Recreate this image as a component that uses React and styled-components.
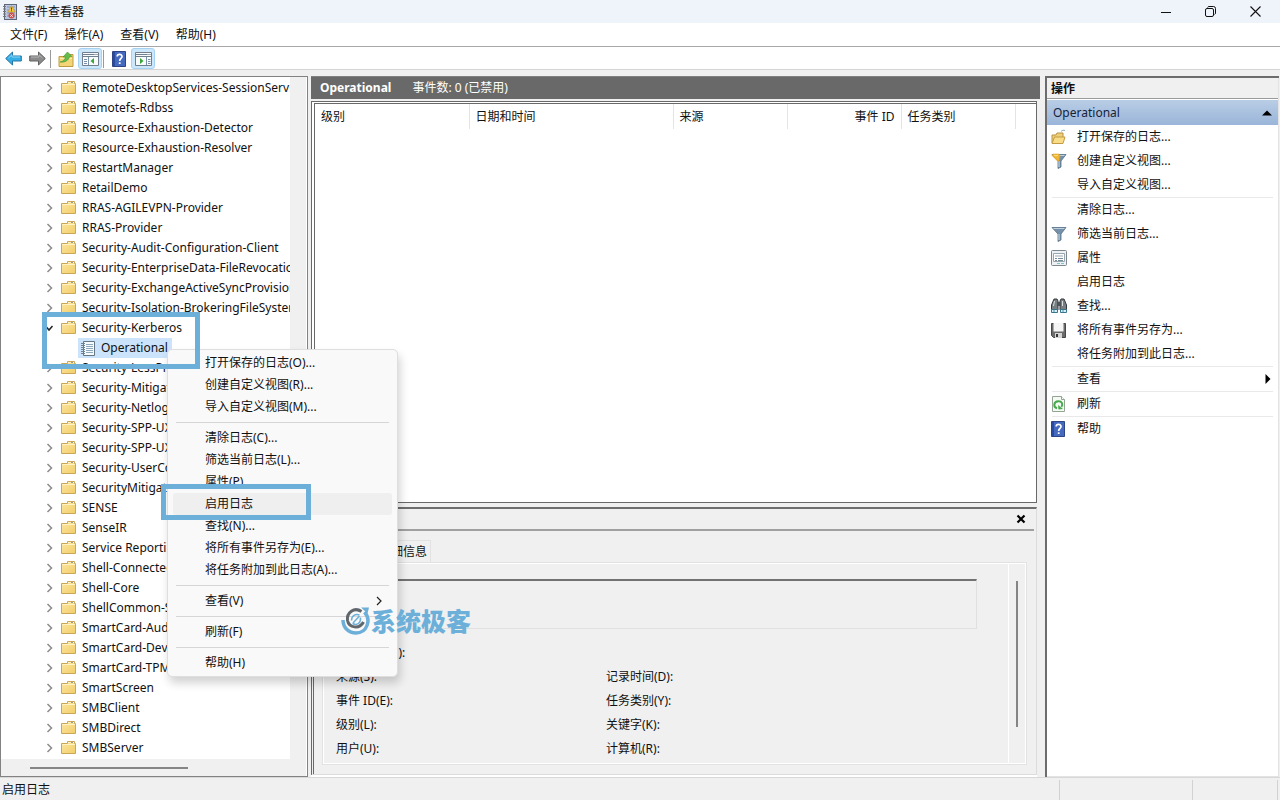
import React from "react";
import styled, { createGlobalStyle, css } from "styled-components";

const GlobalStyle = createGlobalStyle`
  * {
    box-sizing: border-box;
  }

  body {
    margin: 0;
    background: #f0f0f0;
    color: #111;
    font-family: "Noto Sans", "Noto Sans CJK SC", sans-serif;
    font-size: 12px;
    line-height: 20px;
    overflow: hidden;
  }

  button {
    margin: 0;
    padding: 0;
    border: 0;
    background: none;
    color: inherit;
    font: inherit;
    text-align: left;
  }

  svg {
    display: block;
    flex: none;
  }
`;

const Window = styled.div`
  position: relative;
  display: flex;
  flex-direction: column;
  height: 100vh;
`;

const TitleBar = styled.header`
  display: flex;
  align-items: center;
  height: 23px;
  padding: 0 2px;
  background: #eff3fa;
`;

const Title = styled.h1`
  flex: 1;
  margin: 0;
  padding-left: 6px;
  font-size: 12px;
  font-weight: 400;
`;

const CaptionButton = styled.button`
  display: flex;
  align-items: center;
  justify-content: center;
  width: 45px;
  height: 20px;
`;

const MenuBar = styled.nav`
  display: flex;
  gap: 17px;
  height: 24px;
  padding: 0 10px;
  align-items: center;
  background: #fff;
  border-bottom: 1px solid #a8a8a8;
`;

const ToolBar = styled.div`
  display: flex;
  align-items: center;
  height: 23px;
  padding: 1px 0 0 1px;
  background: #fff;
  border-bottom: 1px solid #d4d4d4;
`;

const ToolButton = styled.button`
  display: flex;
  align-items: center;
  justify-content: center;
  width: 24px;
  height: 21px;
  border-radius: 3px;
  ${props =>
    props.$pressed &&
    css`
      background: #cce6fa;
      border: 1px solid #a5d2f3;
    `}
`;

const ToolDivider = styled.span`
  width: 1px;
  height: 18px;
  margin: 0 3px 0 1px;
  background: #9a9a9a;
`;

const Main = styled.main`
  flex: 1;
  min-height: 0;
  display: grid;
  grid-template-columns: 308px minmax(0, 1fr) 234px;
  padding: 6px 1px 0 0;
`;

const TreePane = styled.section`
  display: grid;
  grid-template-columns: minmax(0, 1fr) 17px;
  grid-template-rows: minmax(0, 1fr) 17px;
  border: 1px solid #828282;
  box-shadow: inset -1px 0 #fff;
  min-height: 0;
`;

const Tree = styled.ul`
  margin: 0;
  padding: 1px 0 0;
  list-style: none;
  background: #fff;
  overflow: hidden;
`;

const Branch = styled.li`
  display: flex;
  align-items: center;
  height: 20px;
  padding-left: ${props => (props.$leaf ? 77 : 43)}px;
  white-space: nowrap;
`;

const BranchText = styled.span`
  padding-left: 6px;
`;

const Selected = styled.span`
  display: flex;
  align-items: center;
  gap: 6px;
  height: 20px;
  padding: 0 4px 0 3px;
  background: #cce4fb;
`;

const Expander = styled.span`
  flex: none;
  width: 17px;
`;

const ScrollX = styled.div`
  grid-column: 1 / -1;
  padding: 8px 0 0 29px;
`;

const ThumbX = styled.div`
  width: 158px;
  height: 2px;
  background: #858585;
`;

const CenterPane = styled.section`
  display: flex;
  flex-direction: column;
  margin: 0 5px 0 3px;
  min-height: 0;
`;

const CenterHeader = styled.header`
  display: flex;
  gap: 21px;
  align-items: center;
  height: 23px;
  padding-left: 9px;
  background: #696969;
  color: #fff;
  border-top: 1px solid #808080;
`;

const EventList = styled.div`
  flex: 1;
  margin: 2px 3px 0 0;
  background: #fff;
  border-color: #696969;
  border-style: double solid solid double;
  border-width: 3px 1px 1px 4px;
  min-height: 0;
`;

const EventTable = styled.table`
  width: 100%;
  table-layout: fixed;
  border-collapse: collapse;
`;

const HeadCell = styled.th`
  width: ${props => props.$width};
  height: 25px;
  padding: 0 6px;
  border-right: ${props => (props.$last ? "0" : "1px solid #e4e4e4")};
  font-weight: 400;
  text-align: ${props => props.$align || "left"};
`;

const Preview = styled.section`
  display: flex;
  flex-direction: column;
  height: 268px;
  margin: 4px 3px 2px 0;
  border: 1px solid #dcdcdc;
  border-top: 2px solid #6e6e6e;
  border-left: 3px double #696969;
  box-shadow: 0 2px #fff;
`;

const PreviewHeader = styled.header`
  display: flex;
  justify-content: flex-end;
  align-items: center;
  height: 22px;
  margin-right: 2px;
  padding-right: 8px;
  border-bottom: 2px solid #a0a0a0;
`;

const Tabs = styled.div`
  display: flex;
  padding: 9px 0 0 10px;
`;

const Tab = styled.button`
  min-width: 51px;
  height: 22px;
  padding: 0 3px;
  border: 1px solid #e2e2e2;
  border-bottom: 0;
  text-align: center;
`;

const TabPage = styled.div`
  flex: 1;
  display: flex;
  margin: 0 9px 9px 8px;
  border: 1px solid #e2e2e2;
  box-shadow: inset 1px 1px #fff, inset -1px -1px #fff;
`;

const Details = styled.div`
  flex: 1;
  padding: 16px 31px 0 13px;
  border-right: 1px solid #fff;
`;

const Message = styled.div`
  height: 50px;
  margin-bottom: 12px;
  border: 1px solid #e0e0e0;
  border-top: 2px solid #727272;
`;

const Fields = styled.dl`
  display: grid;
  grid-template-columns: 270px 1fr;
  grid-auto-rows: 24px;
  margin: 0;
`;

const Field = styled.dt`
  display: flex;
  align-items: center;
  grid-column: ${props => (props.$wide ? "1 / -1" : "auto")};
`;

const ScrollY = styled.div`
  width: 17px;
  padding: 18px 0 0 7px;
`;

const ThumbY = styled.div`
  width: 2px;
  height: 146px;
  background: #858585;
`;

const ActionsPane = styled.aside`
  display: flex;
  flex-direction: column;
  background: #fff;
  border: solid #6c6c6c;
  border-width: 2px 0 0 2px;
  box-shadow: inset -1px -1px #e3e3e3;
`;

const ActionsTitle = styled.h2`
  height: 21px;
  margin: 0 1px 1px 0;
  padding-left: 4px;
  background: #f0f0f0;
  border-bottom: 1px solid #9a9a9a;
  font-size: 12px;
  font-weight: 700;
  line-height: 22px;
`;

const GroupHeader = styled.button`
  display: flex;
  align-items: center;
  justify-content: space-between;
  height: 25px;
  margin-right: 1px;
  padding: 0 6px;
  background: linear-gradient(#b9cde5, #9ab5d9);
  color: #14233a;
`;

const Action = styled.button`
  display: flex;
  align-items: center;
  height: 24px;
  padding: 0 8px 0 4px;
`;

const ActionIcon = styled.span`
  width: 26px;
`;

const ActionLabel = styled.span`
  flex: 1;
`;

const ActionRule = styled.hr`
  width: auto;
  height: 1px;
  margin: 0 6px 0 5px;
  border: 0;
  background: #e9e9e9;
`;

const StatusBar = styled.footer`
  display: grid;
  grid-template-columns: 1fr 133px 85px 2px;
  align-items: end;
  height: 23px;
  border-top: 1px solid #d8d8d8;
`;

const StatusCell = styled.span`
  height: 20px;
  padding-left: 2px;
  border-right: 1px solid #d2d2d2;
`;

const ContextMenu = styled.div`
  position: absolute;
  left: 167px;
  top: 349px;
  width: 231px;
  padding: 2px 5px;
  background: #f9f9f9;
  border: 1px solid #dedede;
  border-radius: 5px;
  box-shadow: 2px 6px 10px rgba(0, 0, 0, 0.18);
`;

const MenuItem = styled.button`
  display: flex;
  align-items: center;
  justify-content: space-between;
  width: 100%;
  height: 22px;
  padding: 0 9px 0 32px;
  border-radius: 3px;
  background: ${props => (props.$hover ? "#efefef" : "transparent")};
`;

const MenuRule = styled.hr`
  height: 1px;
  margin: 4px 3px;
  border: 0;
  background: #d6d6d6;
`;

const Callout = styled.div`
  position: absolute;
  left: ${props => props.$x}px;
  top: ${props => props.$y}px;
  width: ${props => props.$w}px;
  height: ${props => props.$h}px;
  border: 5px solid #6cafd9;
  pointer-events: none;
`;

const Watermark = styled.div`
  position: absolute;
  left: 341px;
  top: 606px;
  display: flex;
  align-items: center;
  height: 30px;
  color: #6cafd9;
  font-size: 25px;
  font-weight: 900;
`;

const AppIcon = () => (
  <svg width="16" height="16" viewBox="0 0 16 16">
    <rect x="2.5" y=".5" width="12" height="15" fill="#b9c7e2" stroke="#5d6577" />
    <path d="M5 3h8M5 6h8M5 9h8M5 12h8" stroke="#7f91b7" />
    <path d="M1 2.5h3M1 5h3M1 7.5h3M1 10h3M1 12.5h3" stroke="#777" />
    <path d="M9.5 1.5 13 8H6z" fill="#f6cb3e" stroke="#c79624" strokeWidth=".6" />
    <path d="M9.5 3.5v2.2M9.5 6.3v1" stroke="#5b4300" />
    <circle cx="9.5" cy="11.6" r="3" fill="#d34b45" />
    <path d="m8.3 10.4 2.4 2.4m0-2.4-2.4 2.4" stroke="#fff" strokeWidth=".9" />
  </svg>
);

const Arrow = ({ back }) => (
  <svg width="17" height="15" viewBox="0 0 17 15">
    <path
      d={back ? "M.7 7.5 7.5 1v4h8.800v5H7.500v4z" : "M16.300 7.500 9.500 1v4H.7v5h8.800v4z"}
      fill={back ? "#35aee5" : "#8b8b8b"}
      stroke={back ? "#2476a7" : "#606060"}
    />
    <path d={back ? "M3.5 7 7 3.8V6h8" : "M2 6h8V3.8L13.5 7"} fill="none" stroke={back ? "#86d7f7" : "#b5b5b5"} />
  </svg>
);

const FolderUpIcon = () => (
  <svg width="16" height="16" viewBox="0 0 16 16">
    <path d="M1 5.5h6l1-2h7v12H1z" fill="#f3d578" stroke="#bd9b43" />
    <path d="M2 7.5h12" stroke="#fbe9ae" />
    <path d="M2 11c3.5-.5 5-2.6 5.500-5H5l4.500-5L14 5.500h-2.500C11 9 7 11.800 2 11z" fill="#64bd4b" stroke="#3f9330" strokeWidth=".6" />
  </svg>
);

const PaneIcon = ({ right }) => (
  <svg width="17" height="14" viewBox="0 0 17 14">
    <path d="M.5.5h16v13H.5z" fill="#f8fafc" stroke="#6f7f90" />
    <path d="M1 2.5h11M1 4.500h15" stroke="#6f7f90" />
    <path d="M12.5 2.5h1M14.5 2.5h1" stroke="#44576b" />
    <path d={right ? "M11.5 5v8M13 7.500h2.500M13 9.500h2.500M13 11.500h2.500" : "M6.500 5v8M2 7.500h3M2 9.500h3M2 11.500h3"} stroke="#7990a8" />
    <path d={right ? "M5 6v6l3.500-3z" : "M12 6v6L8.500 9z"} fill="#38a63a" />
  </svg>
);

const HelpIcon = () => (
  <svg width="14" height="16" viewBox="0 0 14 16">
    <path d="M.5.5h13v15H.5z" fill="#4469bf" stroke="#2d4487" />
    <path d="M1 1h2v14H1z" fill="#294a9d" />
    <path d="M5.2 5.6C5.2 2.5 10 2.6 10 5.4c0 2-2.3 2.1-2.3 4.5" fill="none" stroke="#fff" strokeWidth="1.7" />
    <path d="M6.8 11.3h1.8V13H6.8z" fill="#fff" />
  </svg>
);

const FolderIcon = () => (
  <svg width="15" height="15" viewBox="0 0 15 15">
    <defs>
      <linearGradient id="folder" x2="1" y2="1">
        <stop stopColor="#fbe7a3" />
        <stop offset="1" stopColor="#f2cd69" />
      </linearGradient>
    </defs>
    <path d="M.5 2.500h6v-2h7v2h1v10H.5z" fill="url(#folder)" stroke="#cba658" />
    <path d="M7 1.500h6M1 3.500h13" stroke="#fff3c4" />
    <path d="M10 1.500h2" stroke="#8da0a0" />
  </svg>
);

const LogIcon = () => (
  <svg width="14" height="15" viewBox="0 0 14 15">
    <path d="M2.5.5h11v14h-11z" fill="#f5fafd" stroke="#657582" />
    <path d="M5 3.5h7M5 5.5h7M5 7.5h7M5 9.5h7M5 11.5h7" stroke="#8ea8bb" />
    <path d="M0 2.5h4M0 4.5h4M0 6.5h4M0 8.5h4M0 10.5h4M0 12.5h4" stroke="#73828e" />
  </svg>
);

const Chevron = ({ open }) => (
  <svg width="10" height="10" viewBox="0 0 10 10">
    <path
      d={open ? "m1.5 3 3.5 4 3.5-4" : "m3.5 1 4 4-4 4"}
      fill="none"
      stroke={open ? "#222" : "#8c8c8c"}
      strokeWidth="1.5"
    />
  </svg>
);

const OpenFolderIcon = () => (
  <svg width="16" height="16" viewBox="0 0 16 16">
    <path d="M1 14V6h4l1-2h6v4" fill="#eed07a" stroke="#b99243" />
    <path d="M1 14.5 3.5 8H14l-2 6.500z" fill="#f8dc87" stroke="#c39b44" />
    <path d="M10 2.5c1.5-1.5 2.5-1.5 4-1" fill="none" stroke="#8fb0be" />
  </svg>
);

const FunnelIcon = ({ gold }) => (
  <svg width="16" height="16" viewBox="0 0 16 16">
    <path d="M1 1.500h14L10 8v6l-3 1.500V8z" fill="#7590a8" stroke="#536f86" strokeWidth=".8" />
    <path d="M2.5 2.500h11" stroke="#bdd0dc" />
    <path d="M8 8v6" stroke="#d1dfe7" />
    {gold && <path d="M2 1h6l1 2-1 5H6.500L1 2.500z" fill="#efb434" stroke="#d99a1e" strokeWidth=".5" />}
    {gold && <path d="m3 2 2 1 2-1" fill="none" stroke="#fbe08d" />}
  </svg>
);

const PropertiesIcon = () => (
  <svg width="16" height="16" viewBox="0 0 16 16">
    <rect x=".5" y=".5" width="15" height="15" rx="1" fill="#edf1f3" stroke="#7c878e" />
    <path d="M2.5 3.5h11v8h-11zM4 6h8" fill="#fff" stroke="#98a6b0" />
    <path d="M4 8.5h2M7 8.5h5M4 10.5h2M7 10.5h5" stroke="#788b98" />
    <path d="M6 13.5h3M10 13.5h3" stroke="#85c2ca" />
  </svg>
);

const BinocularsIcon = () => (
  <svg width="16" height="16" viewBox="0 0 16 16">
    <path d="M3 1h3l1 2v9H.5V7zM10 1h3l2.5 6v5H9V3z" fill="#777f83" stroke="#34393c" />
    <path d="M6 4h4v4H6z" fill="#4d5357" />
    <path d="M3.5 3 2.5 8M11.5 3v5" stroke="#d8dfe2" />
    <path d="M.5 11.5h6v3h-6zM9.5 11.5h6v3h-6z" fill="#d7eef6" stroke="#39758d" />
    <path d="M2 13h2M11 13h2" stroke="#4395b2" />
  </svg>
);

const SaveIcon = () => (
  <svg width="15" height="15" viewBox="0 0 15 15">
    <path d="M.5.5h14v14h-12l-2-2z" fill="#6b6b6b" stroke="#484848" />
    <path d="M2.500 0h10v8.500h-10z" fill="#f5f5f5" />
    <path d="M4 10h7v5H4z" fill="#d5d5d5" />
    <path d="M5 11h2v3H5z" fill="#333" />
  </svg>
);

const RefreshIcon = () => (
  <svg width="15" height="16" viewBox="0 0 15 16">
    <path d="M1.5.5h9l3 3v12h-12z" fill="#f5fbf4" stroke="#93a493" />
    <path d="M10.5.5v3h3" fill="#fff" stroke="#93a493" />
    <path d="M6 12.300C2 11 2.500 5.500 7.200 5.200c4-.2 5 3.300 3.200 5.800" fill="none" stroke="#48a94c" strokeWidth="2" />
    <path d="m7 9 .5 4.500L12 13z" fill="#48a94c" />
  </svg>
);

const Triangle = ({ up }) => (
  <svg width={up ? 10 : 6} height={up ? 6 : 10} viewBox={up ? "0 0 10 6" : "0 0 6 10"}>
    <path d={up ? "m0 5.5 5-5 5 5z" : "m.5 0 5 5-5 5z"} fill="#000" />
  </svg>
);

const CloseIcon = () => (
  <svg width="10" height="10" viewBox="0 0 10 10">
    <path d="m1.5 1.5 7 7m0-7-7 7" stroke="#000" strokeWidth="2.2" />
  </svg>
);

const BrandIcon = () => (
  <svg width="30" height="30" viewBox="0 0 30 30" fill="none">
    <path d="M2 14C2 22 8 27 15 27c11 0 15.500-13 8.500-21" stroke="#6cafd9" strokeWidth="3.500" />
    <path d="M20 1.500h8l-1.500 6z" fill="#6cafd9" />
    <path d="M20.500 5.500C13 .5 5.500 7 6.500 14.500 8 22 18.500 23.500 22.500 16" stroke="#60676c" strokeWidth="3" />
    <path d="M10.500 14.500c0-5 4-7 8-5.500M11.500 17.500c4.500 2.500 8.500-.5 8-6M12 17l6.500-7" stroke="#6cafd9" strokeWidth="1.500" />
  </svg>
);

const menus = ["文件(F)", "操作(A)", "查看(V)", "帮助(H)"];

const providers = [
  "RemoteDesktopServices-SessionServices",
  "Remotefs-Rdbss",
  "Resource-Exhaustion-Detector",
  "Resource-Exhaustion-Resolver",
  "RestartManager",
  "RetailDemo",
  "RRAS-AGILEVPN-Provider",
  "RRAS-Provider",
  "Security-Audit-Configuration-Client",
  "Security-EnterpriseData-FileRevocationManager",
  "Security-ExchangeActiveSyncProvisioning",
  "Security-Isolation-BrokeringFileSystem",
  "Security-Kerberos",
  "Operational",
  "Security-LessPrivilegedAppContainer",
  "Security-Mitigations",
  "Security-Netlogon",
  "Security-SPP-UX-GenuineCenter-Logging",
  "Security-SPP-UX-Notifications",
  "Security-UserConsentVerifier",
  "SecurityMitigationsBroker",
  "SENSE",
  "SenseIR",
  "Service Reporting API",
  "Shell-ConnectedAccountState",
  "Shell-Core",
  "ShellCommon-StartLayoutPopulation",
  "SmartCard-Audit",
  "SmartCard-DeviceEnum",
  "SmartCard-TPM-VCard-Module",
  "SmartScreen",
  "SMBClient",
  "SMBDirect",
  "SMBServer"
];

const columns = [
  { label: "级别", width: "154px" },
  { label: "日期和时间", width: "204px" },
  { label: "来源", width: "114px" },
  { label: "事件 ID", width: "114px", align: "right" },
  { label: "任务类别", width: "114px" },
  { label: "", width: "auto" }
];

const fields = [
  "来源(S):",
  "记录时间(D):",
  "事件 ID(E):",
  "任务类别(Y):",
  "级别(L):",
  "关键字(K):",
  "用户(U):",
  "计算机(R):"
];

const actions = [
  { label: "打开保存的日志...", icon: <OpenFolderIcon /> },
  { label: "创建自定义视图...", icon: <FunnelIcon gold /> },
  { label: "导入自定义视图..." },
  null,
  { label: "清除日志..." },
  { label: "筛选当前日志...", icon: <FunnelIcon /> },
  { label: "属性", icon: <PropertiesIcon /> },
  { label: "启用日志" },
  { label: "查找...", icon: <BinocularsIcon /> },
  { label: "将所有事件另存为...", icon: <SaveIcon /> },
  { label: "将任务附加到此日志..." },
  null,
  { label: "查看", more: true },
  null,
  { label: "刷新", icon: <RefreshIcon /> },
  null,
  { label: "帮助", icon: <HelpIcon /> }
];

const contextItems = [
  "打开保存的日志(O)...",
  "创建自定义视图(R)...",
  "导入自定义视图(M)...",
  null,
  "清除日志(C)...",
  "筛选当前日志(L)...",
  "属性(P)",
  "启用日志",
  "查找(N)...",
  "将所有事件另存为(E)...",
  "将任务附加到此日志(A)...",
  null,
  "查看(V)",
  null,
  "刷新(F)",
  null,
  "帮助(H)"
];

const TreeNode = ({ name }) => {
  if (name === "Operational") {
    return (
      <Branch $leaf>
        <Selected>
          <LogIcon />
          {name}
        </Selected>
      </Branch>
    );
  }

  return (
    <Branch>
      <Expander>
        <Chevron open={name === "Security-Kerberos"} />
      </Expander>
      <FolderIcon />
      <BranchText>{name}</BranchText>
    </Branch>
  );
};

const App = () => (
  <Window>
    <GlobalStyle />
    <TitleBar>
      <AppIcon />
      <Title>事件查看器</Title>
      <CaptionButton aria-label="最小化">
        <svg width="10" height="10" viewBox="0 0 10 10">
          <path d="M0 5.500h10" stroke="#111" />
        </svg>
      </CaptionButton>
      <CaptionButton aria-label="还原">
        <svg width="11" height="11" viewBox="0 0 11 11" fill="none" stroke="#111">
          <rect x=".5" y="2.500" width="8" height="8" rx="1.500" />
          <path d="M2.500 1.500Q3 .5 4 .5h4.500q2 0 2 2V7q0 1-1 1.500" />
        </svg>
      </CaptionButton>
      <CaptionButton aria-label="关闭">
        <svg width="11" height="11" viewBox="0 0 11 11">
          <path d="m.5.5 10 10m0-10-10 10" stroke="#111" strokeWidth="1.100" />
        </svg>
      </CaptionButton>
    </TitleBar>
    <MenuBar>
      {menus.map(label => (
        <button key={label}>{label}</button>
      ))}
    </MenuBar>
    <ToolBar>
      <ToolButton aria-label="后退">
        <Arrow back />
      </ToolButton>
      <ToolButton aria-label="前进">
        <Arrow />
      </ToolButton>
      <ToolDivider />
      <ToolButton aria-label="向上">
        <FolderUpIcon />
      </ToolButton>
      <ToolButton aria-label="控制台树" $pressed>
        <PaneIcon />
      </ToolButton>
      <ToolDivider />
      <ToolButton aria-label="帮助">
        <HelpIcon />
      </ToolButton>
      <ToolButton aria-label="操作窗格" $pressed>
        <PaneIcon right />
      </ToolButton>
    </ToolBar>

    <Main>
      <TreePane>
        <Tree>
          {providers.map(name => (
            <TreeNode key={name} name={name} />
          ))}
        </Tree>
        <ScrollX>
          <ThumbX />
        </ScrollX>
      </TreePane>

      <CenterPane>
        <CenterHeader>
          <strong>Operational</strong>
          <span>事件数: 0 (已禁用)</span>
        </CenterHeader>
        <EventList>
          <EventTable>
            <thead>
              <tr>
                {columns.map((column, i) => (
                  <HeadCell
                    key={i}
                    $width={column.width}
                    $align={column.align}
                    $last={i === columns.length - 1}
                  >
                    {column.label}
                  </HeadCell>
                ))}
              </tr>
            </thead>
          </EventTable>
        </EventList>
        <Preview>
          <PreviewHeader>
            <button aria-label="关闭预览">
              <CloseIcon />
            </button>
          </PreviewHeader>
          <Tabs>
            <Tab>常规</Tab>
            <Tab>详细信息</Tab>
          </Tabs>
          <TabPage>
            <Details>
              <Message />
              <Fields>
                <Field $wide>日志名称(M):</Field>
                {fields.map(label => (
                  <Field key={label}>{label}</Field>
                ))}
              </Fields>
            </Details>
            <ScrollY>
              <ThumbY />
            </ScrollY>
          </TabPage>
        </Preview>
      </CenterPane>

      <ActionsPane>
        <ActionsTitle>操作</ActionsTitle>
        <GroupHeader>
          Operational
          <Triangle up />
        </GroupHeader>
        {actions.map((action, i) =>
          action ? (
            <Action key={i}>
              <ActionIcon>{action.icon}</ActionIcon>
              <ActionLabel>{action.label}</ActionLabel>
              {action.more && <Triangle />}
            </Action>
          ) : (
            <ActionRule key={i} />
          )
        )}
      </ActionsPane>
    </Main>

    <StatusBar>
      <StatusCell>启用日志</StatusCell>
      <StatusCell />
      <StatusCell />
    </StatusBar>

    <ContextMenu>
      {contextItems.map((label, i) =>
        label ? (
          <MenuItem key={i} $hover={label === "启用日志"}>
            {label}
            {label === "查看(V)" && (
              <svg width="8" height="10" viewBox="0 0 8 10">
                <path d="m2 1 4 4-4 4" fill="none" stroke="#222" strokeWidth="1.200" />
              </svg>
            )}
          </MenuItem>
        ) : (
          <MenuRule key={i} />
        )
      )}
    </ContextMenu>
    <Callout $x={42} $y={312} $w={158} $h={57} />
    <Callout $x={161} $y={484} $w={150} $h={36} />
    <Watermark>
      <BrandIcon />
      系统极客
    </Watermark>
  </Window>
);

export default App;
